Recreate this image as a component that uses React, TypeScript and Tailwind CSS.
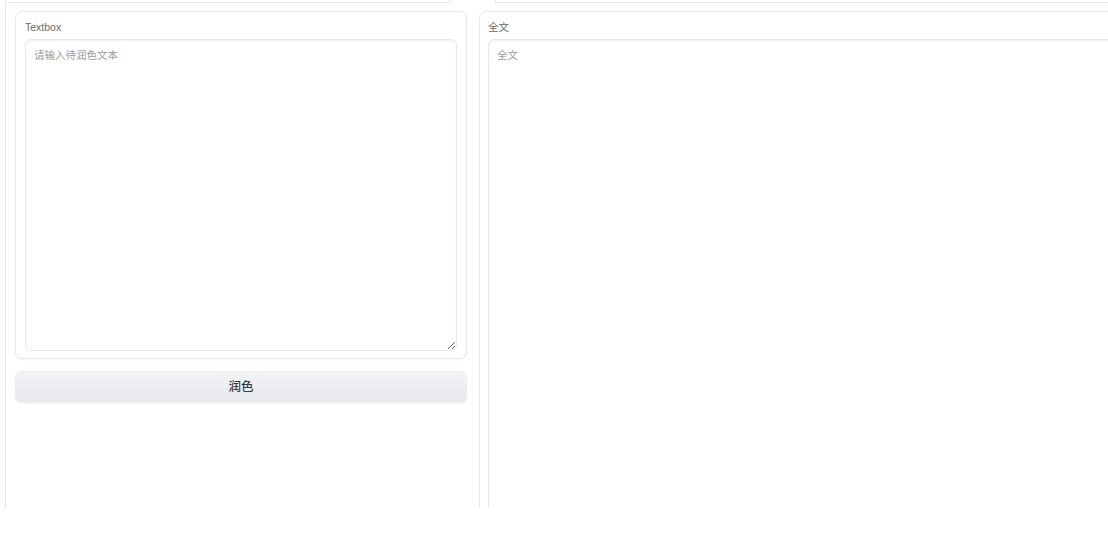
import React from "react";

const font = { fontFamily: '"Liberation Sans", "Noto Sans CJK SC", sans-serif' };

function Block({ label, placeholder, className }: { label: string; placeholder: string; className: string }) {
  return (
    <div className={`flex flex-col rounded-[7px] border border-[#e8e8eb] bg-white shadow-[0_1px_2px_rgba(0,0,0,0.04)] ${className}`}>
      <span className="text-[10.5px] leading-[14px] text-[#6b6b6b]">{label}</span>
      <textarea
        placeholder={placeholder}
        className="mt-[5px] flex-1 rounded-[6px] border border-[#e8e8eb] bg-white px-[8px] py-[7px] text-[10.5px] leading-[16px] text-[#374151] shadow-[inset_0_1px_2px_rgba(0,0,0,0.06)] outline-none placeholder:text-[#9a9a9f]"
      />
    </div>
  );
}

export default function App() {
  return (
    <div className="h-[550px] w-[1108px] overflow-hidden bg-white" style={font}>
      {/* bottom edges of the panels above */}
      <div className="flex h-[3px]">
        <div className="ml-[5px] w-[445px] border-x border-b border-[#e8e8eb]" />
        <div className="ml-[45px] flex-1 border-b border-l border-[#e8e8eb]" />
      </div>

      <div className="ml-[5px] h-[505px] overflow-hidden border-l border-[#e8e8eb] pl-[9px] pt-[8px]">
        <div className="flex items-start gap-[12px]">
          <div className="flex w-[452px] shrink-0 flex-col gap-[12px]">
            <Block label="Textbox" placeholder="请输入待润色文本" className="h-[348px] px-[9px] pb-[7px] pt-[8px]" />
            <button className="h-[32px] rounded-[6px] border border-[#eceef1] bg-gradient-to-b from-[#f3f4f6] to-[#e7e8ec] text-[12.5px] font-medium text-[#333a45] shadow-[0_1px_2px_rgba(0,0,0,0.04)]">
              润色
            </button>
          </div>
          <Block label="全文" placeholder="全文" className="h-[620px] w-[700px] shrink-0 px-[8px] pb-[7px] pt-[8px]" />
        </div>
      </div>
    </div>
  );
}
